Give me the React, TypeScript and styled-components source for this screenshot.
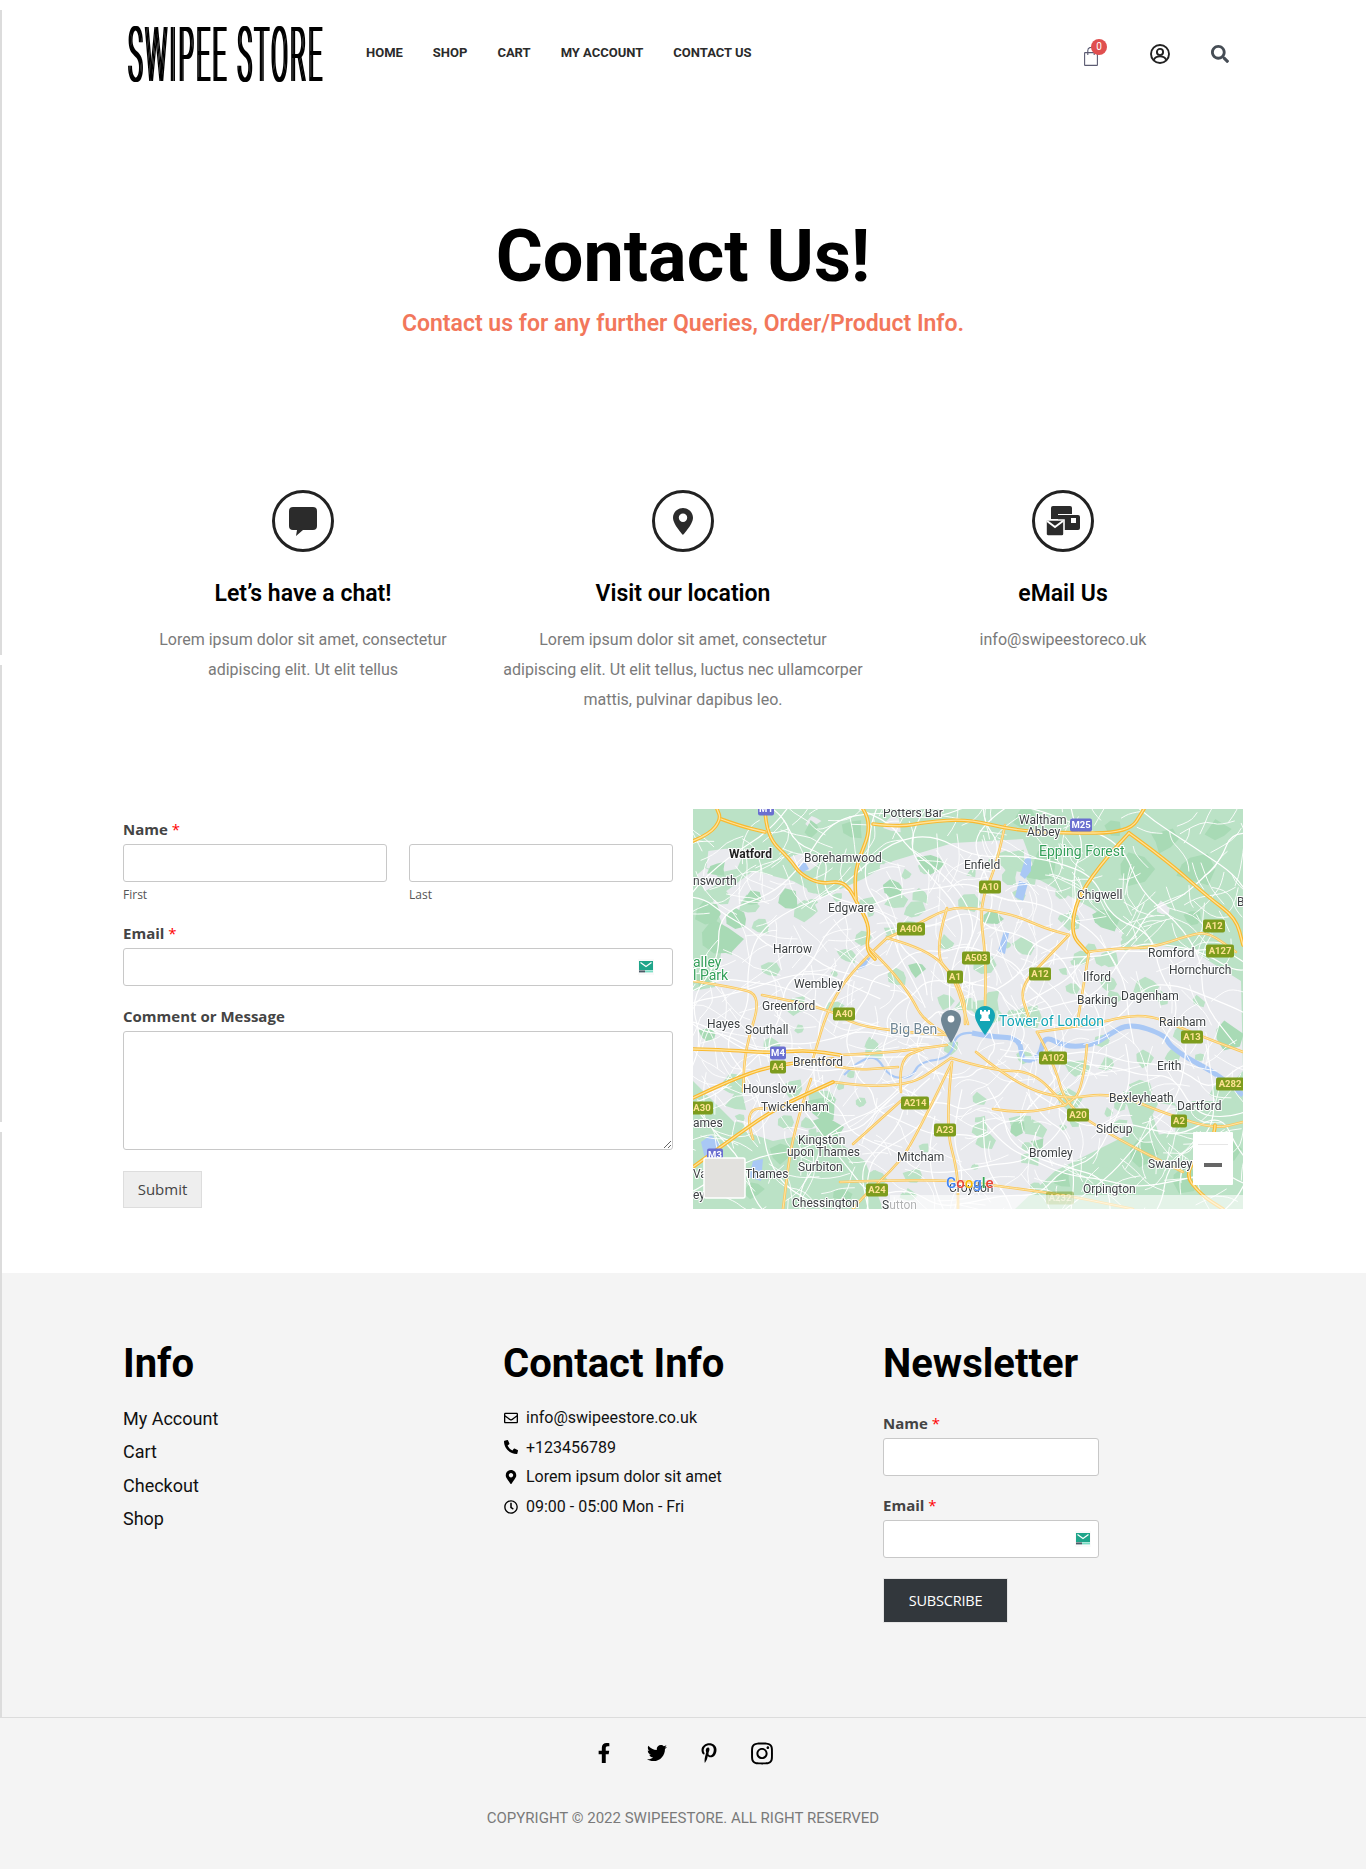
import React from 'react'
import styled, { createGlobalStyle } from 'styled-components'
import {
  FaFacebookF,
  FaInstagram,
  FaMapMarkerAlt,
  FaPhoneAlt,
  FaPinterestP,
  FaRegClock,
  FaRegEnvelope,
  FaSearch,
  FaTwitter,
} from 'react-icons/fa'

//-----------------------------------------------------------------------------------------------
// Global
//-----------------------------------------------------------------------------------------------
const GlobalStyle = createGlobalStyle`
  html, body { margin: 0; padding: 0; background: #fff; }
  body { font-family: Roboto, "Liberation Sans", sans-serif; color: #000; }
  * { box-sizing: border-box; }
`

const Page = styled.div`
  position: relative;
  width: 1366px;
  height: 1869px;
  overflow: hidden;
`

const EdgeRail = styled.div`
  position: absolute;
  left: 0;
  top: 10px;
  width: 2px;
  display: flex;
  flex-direction: column;
  gap: 10px;
`

const EdgeSegment = styled.div<{ $h: number }>`
  height: ${(p) => p.$h}px;
  background: #dcdcdc;
`

const Container = styled.div`
  width: 1120px;
  margin: 0 auto;
`

//-----------------------------------------------------------------------------------------------
// Header
//-----------------------------------------------------------------------------------------------
const Header = styled(Container)`
  height: 106px;
  display: flex;
  align-items: center;
`

const LogoBox = styled.a`
  display: block;
  width: 195px;
  height: 58px;
  margin-left: 4px;
  margin-top: 4px;
  color: #000;
`

const LogoText = styled.span`
  display: block;
  font-size: 76px;
  line-height: 58px;
  font-weight: 300;
  white-space: nowrap;
  letter-spacing: 8px;
  text-shadow: 4px 0 0 #000, 8px 0 0 #000;
  transform: scaleX(0.32);
  transform-origin: left center;
`

const Nav = styled.nav`
  display: flex;
  gap: 30px;
  margin-left: 44px;
`

const NavLink = styled.a`
  font-size: 13px;
  line-height: 16px;
  font-weight: 700;
  color: #2b2b2b;
  text-transform: uppercase;
`

const HeaderIcons = styled.div`
  margin-left: auto;
  display: flex;
  align-items: center;
  padding-right: 14px;
  padding-top: 2px;
`

const CartButton = styled.div`
  position: relative;
  width: 14px;
  height: 19px;
  margin-top: 4px;
  margin-right: 52px;
  color: #5b5b72;
`

const CartBadge = styled.span`
  position: absolute;
  left: 7px;
  top: -8px;
  width: 16px;
  height: 16px;
  border-radius: 50%;
  background: #e04f4f;
  color: #fff;
  font-size: 10px;
  line-height: 16px;
  text-align: center;
`

const UserButton = styled.div`
  width: 20px;
  height: 20px;
  margin-right: 41px;
  color: #222;
`

const SearchButton = styled.div`
  width: 18px;
  height: 18px;
  color: #464d55;
  font-size: 18px;
  line-height: 18px;
`

//-----------------------------------------------------------------------------------------------
// Hero and features
//-----------------------------------------------------------------------------------------------
const Hero = styled.section`
  padding-top: 109px;
  text-align: center;
`

const HeroTitle = styled.h1`
  margin: 0;
  font-size: 72px;
  line-height: 84px;
  font-weight: 700;
  color: #000;
`

const HeroSub = styled.p`
  margin: 10px 0 0;
  font-size: 23px;
  line-height: 30px;
  font-weight: 600;
  color: #f2775b;
`

const Features = styled.div`
  display: grid;
  grid-template-columns: repeat(3, 380px);
  justify-content: center;
  margin-top: 151px;
  height: 224px;
`

const Feature = styled.div`
  text-align: center;
`

const FeatureCircle = styled.div`
  width: 62px;
  height: 62px;
  margin: 0 auto;
  border: 3px solid #222;
  border-radius: 50%;
  display: flex;
  align-items: center;
  justify-content: center;
  color: #2b2b2b;
`

const FeatureTitle = styled.h3`
  margin: 27px 0 0;
  font-size: 23px;
  line-height: 30px;
  font-weight: 600;
  color: #000;
`

const FeatureText = styled.p`
  margin: 16px 0 0;
  font-size: 16px;
  line-height: 30px;
  color: #7a7a7a;
`

//-----------------------------------------------------------------------------------------------
// Form
//-----------------------------------------------------------------------------------------------
const ContactRow = styled(Container)`
  display: grid;
  grid-template-columns: 550px 550px;
  column-gap: 20px;
  margin-top: 95px;
`

const FormColumn = styled.form`
  padding-top: 10px;
  font-family: "Open Sans", "Noto Sans", sans-serif;
`

const FieldLabel = styled.label<{ $gap?: number }>`
  display: block;
  margin-top: ${(p) => p.$gap ?? 0}px;
  margin-bottom: 5px;
  font-size: 15px;
  line-height: 20px;
  font-weight: 700;
  color: #444;
`

const Required = styled.span`
  color: #f00;
  font-weight: 400;
  margin-left: 4px;
`

const NameRow = styled.div`
  display: grid;
  grid-template-columns: 264px 264px;
  column-gap: 22px;
`

const TextInput = styled.input`
  display: block;
  width: 100%;
  height: 38px;
  background: #fff;
  border: 1px solid #c8c8c8;
  border-radius: 3px;
  outline: none;
`

const SubLabel = styled.div`
  margin-top: 5px;
  font-size: 12px;
  line-height: 16px;
  color: #555;
`

const InputWrap = styled.div`
  position: relative;
`

const TempMail = styled.svg<{ $right: number }>`
  position: absolute;
  right: ${(p) => p.$right}px;
  top: 11px;
  width: 16px;
  height: 16px;
`

const MessageBox = styled.textarea`
  display: block;
  width: 100%;
  height: 119px;
  background: #fff;
  border: 1px solid #c8c8c8;
  border-radius: 3px;
  outline: none;
`

const SubmitButton = styled.button`
  display: block;
  width: 79px;
  height: 37px;
  margin-top: 21px;
  padding: 0 0 2px;
  background: #eee;
  border: 1px solid #ddd;
  font-family: "Open Sans", sans-serif;
  font-size: 15px;
  color: #444;
`

const MapFrame = styled.div`
  width: 550px;
  height: 400px;
  overflow: hidden;
  background: #e9eaee;
`

const MapSvg = styled.svg`
  display: block;
  font-family: Roboto, sans-serif;
  filter: blur(0.35px);
`

//-----------------------------------------------------------------------------------------------
// Footer
//-----------------------------------------------------------------------------------------------
const Footer = styled.footer`
  margin-top: 64px;
  height: 596px;
  background: #f4f4f4;
`

const FooterGrid = styled(Container)`
  display: grid;
  grid-template-columns: repeat(3, 380px);
  height: 444px;
  padding-top: 67px;
`

const FooterTitle = styled.h2`
  margin: 0;
  font-size: 40px;
  line-height: 48px;
  font-weight: 700;
  color: #000;
`

const LinkList = styled.ul`
  list-style: none;
  margin: 14px 0 0;
  padding: 0;
`

const LinkItem = styled.li`
  font-size: 18px;
  line-height: 33.4px;
  color: #111;
`

const InfoList = styled.ul`
  list-style: none;
  margin: 15px 0 0;
  padding: 0;
`

const InfoItem = styled.li`
  display: flex;
  align-items: center;
  gap: 8px;
  font-size: 16px;
  line-height: 29.6px;
  color: #111;
`

const InfoIcon = styled.span`
  display: inline-flex;
  justify-content: center;
  width: 15px;
  font-size: 14px;
  color: #000;
`

const NewsForm = styled.form`
  margin-top: 25px;
  width: 216px;
  font-family: "Open Sans", "Noto Sans", sans-serif;
`

const SubscribeButton = styled.button`
  display: block;
  width: 125px;
  height: 45px;
  margin-top: 20px;
  padding: 0;
  background: #32373c;
  border: 1px solid #e4e4e4;
  color: #fff;
  font-family: "Open Sans", sans-serif;
  font-size: 14.5px;
  letter-spacing: -0.2px;
`

const FooterBottom = styled.div`
  border-top: 1px solid #dcdcdc;
  padding-top: 24px;
  text-align: center;
`

const Socials = styled.div`
  display: flex;
  justify-content: center;
  gap: 30.5px;
  height: 22px;
`

const SocialIcon = styled.a<{ $size?: number }>`
  width: 22px;
  height: 22px;
  display: flex;
  align-items: center;
  justify-content: center;
  color: #000;
  font-size: ${(p) => p.$size ?? 20}px;
`

const Copyright = styled.p`
  margin: 44px 0 0;
  font-size: 15px;
  line-height: 20px;
  color: #7a7a7a;
`

//-----------------------------------------------------------------------------------------------
// Icons
//-----------------------------------------------------------------------------------------------
const BagIcon = () => (
  <svg width="14" height="19" viewBox="0 0 14 19" fill="none" stroke="currentColor" strokeWidth="1.1">
    <rect x="0.6" y="5.6" width="12.8" height="12.8" rx="0.5" />
    <path d="M3.8 8V3.6a3.2 3.2 0 0 1 6.4 0V8" />
  </svg>
)

const UserIcon = () => (
  <svg width="20" height="20" viewBox="0 0 20 20" fill="none" stroke="currentColor" strokeWidth="1.9">
    <circle cx="10" cy="10" r="9" />
    <circle cx="10" cy="8" r="3.1" />
    <path d="M3.8 16c1-2.6 3.4-3.6 6.200-3.6s5.200 1 6.200 3.600" />
  </svg>
)

const ChatIcon = () => (
  <svg width="28" height="29" viewBox="0 0 28 29" fill="currentColor">
    <path d="M4 0h20a4 4 0 0 1 4 4v15a4 4 0 0 1-4 4H14l-7 6 1-6H4a4 4 0 0 1-4-4V4a4 4 0 0 1 4-4z" />
  </svg>
)

const PinIcon = () => (
  <svg width="20" height="27" viewBox="0 0 20 27" fill="currentColor">
    <path
      fillRule="evenodd"
      d="M10 0C4.500 0 0 4.400 0 9.800 0 16.500 10 27 10 27s10-10.500 10-17.200C20 4.400 15.500 0 10 0zm0 5.600a4.200 4.200 0 1 1 0 8.400 4.200 4.200 0 0 1 0-8.400z"
    />
  </svg>
)

const MailWalletIcon = () => (
  <svg width="34" height="30" viewBox="0 0 34 30" fill="currentColor">
    <path d="M7 0h17a2 2 0 0 1 2 2v6H5V2a2 2 0 0 1 2-2z" />
    <path fillRule="evenodd" d="M12 9h20a2 2 0 0 1 2 2v11a2 2 0 0 1-2 2H12zM25 12v5h5v-5z" />
    <path d="M5 8h7v5H5z" />
    <path d="M0 14h18v14a2 2 0 0 1-2 2H2a2 2 0 0 1-2-2z" stroke="#fff" strokeWidth="1.6" />
    <path d="M1 15l8 6 8-6" fill="none" stroke="#fff" strokeWidth="2" />
  </svg>
)

const TempMailIcon: React.FunctionComponent<{ right: number }> = ({ right }) => (
  <TempMail $right={right} viewBox="0 0 16 16">
    <rect width="16" height="16" fill="#fafafa" />
    <rect x="1" y="2" width="14" height="9" fill="#1fa58a" />
    <path d="M2.500 3.400L8 7.400l5.500-4" fill="none" stroke="#fff" strokeWidth="1.2" />
    <rect x="1" y="11.400" width="6" height="2" fill="#4a5a66" />
    <rect x="7" y="11.400" width="8" height="2" fill="#79dcc4" />
  </TempMail>
)

//-----------------------------------------------------------------------------------------------
// Map data
//-----------------------------------------------------------------------------------------------
type Pt = [number, number]

const seeded = (start: number) => {
  let s = start
  return () => {
    s = (s * 16807) % 2147483647
    return s / 2147483647
  }
}

const line = (pts: Pt[]): string => {
  // smooth-ish polyline through the midpoints
  if (pts.length < 3) return 'M' + pts.map((p) => p.join(' ')).join('L')
  let d = `M${pts[0][0]} ${pts[0][1]}`
  for (let i = 1; i < pts.length - 1; i++) {
    const mx = (pts[i][0] + pts[i + 1][0]) / 2
    const my = (pts[i][1] + pts[i + 1][1]) / 2
    d += `Q${pts[i][0]} ${pts[i][1]} ${mx} ${my}`
  }
  const last = pts[pts.length - 1]
  return d + `L${last[0]} ${last[1]}`
}

const blob = (rand: () => number, cx: number, cy: number, r: number): string => {
  const pts: string[] = []
  const n = 7
  for (let i = 0; i < n; i++) {
    const a = (i / n) * Math.PI * 2
    const rr = r * (0.55 + rand() * 0.7)
    pts.push(`${(cx + Math.cos(a) * rr).toFixed(1)},${(cy + Math.sin(a) * rr * 0.85).toFixed(1)}`)
  }
  return pts.join(' ')
}

const urban =
  '60,62 100,72 130,88 170,70 200,52 260,34 330,30 345,70 400,100 440,132 500,142 548,172 550,262 522,292 480,292 430,282 442,322 402,342 362,362 322,400 190,400 172,352 130,322 80,332 50,322 20,292 0,272 0,182 22,178 32,122 20,92'

const motorways: Pt[][] = [
  [[72, 0], [73, 27], [97, 50], [107, 65], [127, 75], [147, 72], [157, 80], [163, 92], [177, 117], [173, 140], [182, 150]],
  [[0, 32], [17, 25], [28, 10], [24, 0]],
  [[28, 10], [47, 17], [72, 23]],
  [[170, 0], [180, 15], [163, 57], [162, 77], [163, 90]],
  [[180, 15], [207, 18], [233, 13], [275, 10], [319, 21], [368, 24], [436, 24], [451, 0]],
  [[436, 24], [472, 50], [515, 88], [543, 109], [550, 136]],
  [[436, 24], [390, 73], [376, 123], [394, 143]],
  [[0, 240], [37, 241], [76, 244], [115, 241], [147, 246]],
  [[0, 289], [33, 273], [80, 256], [140, 250]],
  [[0, 358], [44, 326], [83, 299], [140, 273]],
  [[522, 316], [522, 330], [490, 363], [508, 386], [530, 400]],
]

const aRoads: Pt[][] = [
  [[194, 129], [220, 118], [254, 99], [283, 99], [322, 106], [351, 119], [376, 126]],
  [[312, 16], [304, 56], [286, 96], [293, 149], [292, 199]],
  [[394, 143], [426, 139], [458, 139], [497, 126], [515, 123], [543, 143]],
  [[344, 223], [397, 216], [451, 203], [497, 223], [550, 243]],
  [[147, 246], [194, 244], [254, 236]],
  [[69, 186], [135, 199], [161, 216], [211, 223], [254, 226]],
  [[0, 172], [40, 178], [69, 186], [52, 240], [50, 282]],
  [[140, 273], [208, 283], [258, 249]],
  [[259, 253], [219, 337], [197, 363], [172, 386], [160, 400]],
  [[259, 253], [252, 316], [265, 363], [265, 400]],
  [[283, 243], [319, 273], [369, 291], [419, 283], [476, 306], [522, 320], [550, 313]],
  [[344, 223], [362, 256], [372, 296], [422, 329], [490, 363]],
  [[147, 373], [247, 369], [319, 379], [372, 386], [440, 400]],
  [[394, 236], [390, 283], [372, 296]],
  [[176, 139], [197, 159], [219, 189], [229, 209], [254, 226]],
  [[262, 169], [272, 189], [272, 215]],
  [[376, 126], [354, 149], [326, 179], [336, 209]],
  [[194, 129], [160, 160], [135, 199], [120, 250]],
  [[118, 270], [100, 320], [90, 400]],
  [[254, 99], [240, 145], [262, 169], [275, 215]],
  [[194, 129], [235, 140], [262, 169]],
  [[385, 210], [396, 143]],
  [[160, 335], [210, 290]],
  [[60, 330], [50, 300], [83, 299]],
  [[258, 249], [300, 262], [340, 262], [372, 296]],
  [[208, 283], [205, 250], [230, 240]],
  [[120, 250], [150, 262], [205, 258]],
  [[300, 300], [330, 305], [372, 296]],
]

const rand = seeded(4711)

const greenPatches: string[] = Array.from({ length: 150 }, () =>
  blob(rand, 20 + rand() * 510, 40 + rand() * 350, 4 + rand() * 10),
)

const darkPatches: string[] = [
  [25, 130, 24], [15, 105, 14], [45, 110, 12], [95, 90, 13], [240, 55, 15], [330, 10, 12],
  [350, 60, 18], [500, 60, 20], [440, 60, 18], [410, 110, 16], [535, 225, 16], [530, 340, 16],
  [450, 345, 16], [490, 370, 15], [130, 300, 20], [135, 318, 16], [90, 345, 12], [15, 225, 10],
  [325, 320, 10], [345, 335, 8], [160, 20, 14], [120, 20, 10], [25, 60, 10], [225, 160, 9], [300, 110, 9],
  [60, 90, 10], [200, 80, 10], [470, 30, 14], [420, 20, 10], [525, 20, 12], [500, 110, 10],
  [10, 170, 10], [370, 370, 10], [60, 380, 10], [150, 385, 9],
].map(([x, y, r]) => blob(rand, x, y, r))

const townPatches: string[] = [
  [35, 50, 20], [110, 55, 14], [120, 12, 8], [15, 70, 12], [195, 60, 10], [200, 15, 10],
  [470, 100, 10], [440, 270, 8], [470, 310, 16], [490, 290, 14],
].map(([x, y, r]) => blob(rand, x, y, r))

const CENTER: Pt = [262, 235]

const radials: string[] = Array.from({ length: 30 }, (_, i) => {
  const base = (i / 30) * Math.PI * 2 + rand() * 0.1
  const pts: Pt[] = []
  let a = base
  for (let r = 30 + rand() * 70; r < 420; r += 30) {
    a += (rand() - 0.5) * 0.3
    pts.push([CENTER[0] + Math.cos(a) * r, CENTER[1] + Math.sin(a) * r * 0.92])
  }
  return line(pts)
})

const rings: string[] = [38, 70, 104, 140, 178, 220, 265, 320].map((r) => {
  const pts: Pt[] = []
  for (let i = 0; i <= 34; i++) {
    const a = (i / 34) * Math.PI * 2
    const rr = r * (0.93 + rand() * 0.14)
    pts.push([CENTER[0] + Math.cos(a) * rr, CENTER[1] + Math.sin(a) * rr * 0.9])
  }
  return line(pts)
})

const streets: string[] = Array.from({ length: 520 }, () => {
  let x = rand() * 550
  let y = rand() * 400
  let a = rand() * Math.PI * 2
  const pts: Pt[] = [[x, y]]
  const steps = 2 + Math.floor(rand() * 3)
  for (let i = 0; i < steps; i++) {
    a += (rand() - 0.5) * 1.4
    const l = 7 + rand() * 12
    x += Math.cos(a) * l
    y += Math.sin(a) * l
    pts.push([x, y])
  }
  return line(pts)
})

const thames: Pt[] = [
  [550, 286], [526, 266], [494, 249], [476, 236], [472, 226], [437, 214], [415, 226], [401, 236],
  [372, 238], [351, 226], [347, 249], [329, 253], [327, 229], [301, 228], [279, 224],
]

const thamesWest: Pt[] = [
  [279, 224], [263, 223], [258, 249], [226, 253], [219, 269], [197, 269], [183, 246], [165, 253], [151, 266],
]

const placeLabels: { t: string; x: number; y: number; bold?: boolean }[] = [
  { t: 'Potters Bar', x: 190, y: 4 },
  { t: 'Waltham', x: 326, y: 11 },
  { t: 'Abbey', x: 334, y: 23 },
  { t: 'Watford', x: 36, y: 45, bold: true },
  { t: 'Borehamwood', x: 111, y: 49 },
  { t: 'Enfield', x: 271, y: 56 },
  { t: 'nsworth', x: 0, y: 72 },
  { t: 'Chigwell', x: 384, y: 86 },
  { t: 'B', x: 544, y: 93 },
  { t: 'Edgware', x: 135, y: 99 },
  { t: 'Harrow', x: 80, y: 140 },
  { t: 'Romford', x: 455, y: 144 },
  { t: 'Hornchurch', x: 476, y: 161 },
  { t: 'Ilford', x: 390, y: 168 },
  { t: 'Wembley', x: 101, y: 175 },
  { t: 'Dagenham', x: 428, y: 187 },
  { t: 'Barking', x: 384, y: 191 },
  { t: 'Greenford', x: 69, y: 197 },
  { t: 'Rainham', x: 466, y: 213 },
  { t: 'Hayes', x: 14, y: 215 },
  { t: 'Southall', x: 52, y: 221 },
  { t: 'Brentford', x: 100, y: 253 },
  { t: 'Erith', x: 464, y: 257 },
  { t: 'Hounslow', x: 50, y: 280 },
  { t: 'Bexleyheath', x: 416, y: 289 },
  { t: 'Dartford', x: 484, y: 297 },
  { t: 'Twickenham', x: 68, y: 298 },
  { t: 'ames', x: 0, y: 314 },
  { t: 'Sidcup', x: 403, y: 320 },
  { t: 'Kingston', x: 105, y: 331 },
  { t: 'upon Thames', x: 94, y: 343 },
  { t: 'Bromley', x: 336, y: 344 },
  { t: 'Mitcham', x: 204, y: 348 },
  { t: 'Swanley', x: 455, y: 355 },
  { t: 'Surbiton', x: 105, y: 358 },
  { t: 'Thames', x: 52, y: 365 },
  { t: 'Va', x: 0, y: 365 },
  { t: 'Croydon', x: 256, y: 379 },
  { t: 'Orpington', x: 390, y: 380 },
  { t: 'ey', x: 0, y: 386 },
  { t: 'Chessington', x: 99, y: 394 },
  { t: 'Sutton', x: 189, y: 396 },
]

const shields: { t: string; x: number; y: number; blue?: boolean }[] = [
  { t: 'M1', x: 73, y: 0, blue: true },
  { t: 'M25', x: 388, y: 16, blue: true },
  { t: 'A10', x: 297, y: 78 },
  { t: 'A12', x: 521, y: 117 },
  { t: 'A406', x: 218, y: 120 },
  { t: 'A127', x: 527, y: 142 },
  { t: 'A503', x: 283, y: 149 },
  { t: 'A12', x: 347, y: 165 },
  { t: 'A1', x: 262, y: 168 },
  { t: 'A40', x: 151, y: 205 },
  { t: 'A13', x: 499, y: 228 },
  { t: 'M4', x: 85, y: 244, blue: true },
  { t: 'A102', x: 360, y: 249 },
  { t: 'A4', x: 85, y: 258 },
  { t: 'A282', x: 537, y: 275 },
  { t: 'A214', x: 222, y: 294 },
  { t: 'A30', x: 9, y: 299 },
  { t: 'A20', x: 385, y: 306 },
  { t: 'A2', x: 486, y: 312 },
  { t: 'A23', x: 252, y: 321 },
  { t: 'M3', x: 22, y: 346, blue: true },
  { t: 'A24', x: 184, y: 381 },
  { t: 'A232', x: 367, y: 389 },
]

//-----------------------------------------------------------------------------------------------
// LondonMap
//-----------------------------------------------------------------------------------------------
const LondonMap = () => (
  <MapSvg width="550" height="400" viewBox="0 0 550 400">
    <rect width="550" height="400" fill="#bbe2c6" />
    <polygon points={urban} fill="#e9eaee" />
    {townPatches.map((p, i) => <polygon key={i} points={p} fill="#e9eaee" />)}
    {greenPatches.map((p, i) => <polygon key={i} points={p} fill="#bbe2c6" />)}
    {darkPatches.map((p, i) => <polygon key={i} points={p} fill="#a8dab5" />)}

    {/* water */}
    <polygon points="8,333 18,326 26,334 24,348 12,350" fill="#a9c8f5" />
    <polygon points="105,56 112,53 116,60 108,64" fill="#a9c8f5" />
    <polygon points="332,50 338,48 338,62 332,70 327,66" fill="#a9c8f5" />
    <polygon points="326,72 335,74 330,92 322,88" fill="#a9c8f5" />
    <polygon points="311,122 316,124 312,145 305,142" fill="#a9c8f5" />
    <polygon points="170,150 178,148 172,158 162,162" fill="#a9c8f5" />
    <polygon points="60,352 70,350 68,372 56,368" fill="#a9c8f5" />
    <path d={line(thames)} fill="none" stroke="#a9c8f5" strokeWidth="5" />
    <path d={line(thamesWest)} fill="none" stroke="#a9c8f5" strokeWidth="2.2" />

    {/* minor roads */}
    <g fill="none" stroke="#fff">
      {streets.map((d, i) => <path key={i} d={d} strokeWidth="0.9" />)}
      {radials.map((d, i) => <path key={i} d={d} strokeWidth="1.2" />)}
      {rings.map((d, i) => <path key={i} d={d} strokeWidth="1.2" />)}
    </g>

    {/* main roads */}
    <g fill="none" strokeLinejoin="round" strokeLinecap="round">
      {aRoads.map((r, i) => <path key={i} d={line(r)} stroke="#fbc75e" strokeWidth="2.6" />)}
      {aRoads.map((r, i) => <path key={i} d={line(r)} stroke="#fde6a8" strokeWidth="1" />)}
      {motorways.map((r, i) => <path key={i} d={line(r)} stroke="#f9b92f" strokeWidth="3.6" />)}
      {motorways.map((r, i) => <path key={i} d={line(r)} stroke="#fee39a" strokeWidth="1.3" />)}
    </g>

    {/* labels */}
    <g fontSize="12" fill="#3c4043" stroke="#fff" strokeWidth="2" style={{ paintOrder: 'stroke' }}>
      {placeLabels.map((l) => (
        <text key={l.t + l.x} x={l.x} y={l.y} dy=".35em" fontWeight={l.bold ? 700 : 400} fill={l.bold ? '#222' : undefined}>
          {l.t}
        </text>
      ))}
      <text x="346" y="42" dy=".35em" fontSize="14" fill="#34a05a">Epping Forest</text>
      <text x="0" y="153" dy=".35em" fontSize="14" fill="#34a05a">alley</text>
      <text x="0" y="166" dy=".35em" fontSize="14" fill="#34a05a">l Park</text>
      <text x="197" y="220" dy=".35em" fontSize="14" fill="#6f8694">Big Ben</text>
      <text x="306" y="212" dy=".35em" fontSize="14" fill="#12a5b5">Tower of London</text>
    </g>

    {/* road shields */}
    {shields.map((s) => {
      const w = s.t.length * 6 + 4
      return (
        <g key={s.t + s.x} opacity={s.t === 'A232' ? 0.5 : 1}>
          <rect x={s.x - w / 2} y={s.y - 6.5} width={w} height="13" rx="2" fill={s.blue ? '#6a6fd0' : '#7d9c1d'} />
          <text x={s.x} y={s.y} dy=".35em" textAnchor="middle" fontSize="9.5" fontWeight="700" fill={s.blue ? '#fff' : '#fde293'}>
            {s.t}
          </text>
        </g>
      )
    })}

    {/* pins */}
    <path d="M258 201c-5.500 0-10 4.300-10 9.700 0 7 10 23.300 10 23.300s10-16.300 10-23.300c0-5.400-4.500-9.700-10-9.700z" fill="#6f8694" />
    <circle cx="258" cy="210" r="3.400" fill="#fff" />
    <path d="M292 197c-5.500 0-10 4.300-10 9.700 0 6.500 10 19.300 10 19.300s10-12.800 10-19.300c0-5.400-4.500-9.700-10-9.700z" fill="#12a5b5" />
    <path d="M287 201h2v1.500h2V201h2v1.500h2V201h2v4l-1.500 1v3l1.500 1.500V212h-10v-1.500l1.500-1.500v-3L287 205z" fill="#fff" />

    {/* controls */}
    <rect x="197" y="386" width="353" height="14" fill="#fff" opacity="0.6" />
    <text x="253" y="374" dy=".35em" fontSize="15" fontWeight="500" stroke="#fff" strokeWidth="0.5" style={{ paintOrder: 'stroke' }}>
      <tspan fill="#4285f4">G</tspan>
      <tspan fill="#ea4335">o</tspan>
      <tspan fill="#fbbc05">o</tspan>
      <tspan fill="#4285f4">g</tspan>
      <tspan fill="#34a853">l</tspan>
      <tspan fill="#ea4335">e</tspan>
    </text>
    <rect x="11" y="349" width="41" height="40" rx="2" fill="#e2e1de" stroke="#fff" strokeWidth="1.500" />
    <rect x="500" y="323" width="40" height="53" rx="1" fill="#fff" />
    <rect x="505" y="335" width="30" height="1" fill="#e6e6e6" />
    <rect x="511" y="354" width="18" height="4" fill="#666" />
  </MapSvg>
)

//-----------------------------------------------------------------------------------------------
// App
//-----------------------------------------------------------------------------------------------
const App: React.FunctionComponent = () => {
  return (
    <Page>
      <GlobalStyle />
      <EdgeRail>
        <EdgeSegment $h={645} />
        <EdgeSegment $h={457} />
        <EdgeSegment $h={585} />
      </EdgeRail>

      <Header>
        <LogoBox>
          <LogoText>SWIPEE STORE</LogoText>
        </LogoBox>
        <Nav>
          <NavLink>Home</NavLink>
          <NavLink>Shop</NavLink>
          <NavLink>Cart</NavLink>
          <NavLink>My Account</NavLink>
          <NavLink>Contact Us</NavLink>
        </Nav>
        <HeaderIcons>
          <CartButton>
            <BagIcon />
            <CartBadge>0</CartBadge>
          </CartButton>
          <UserButton>
            <UserIcon />
          </UserButton>
          <SearchButton>
            <FaSearch />
          </SearchButton>
        </HeaderIcons>
      </Header>

      <Hero>
        <HeroTitle>Contact Us!</HeroTitle>
        <HeroSub>Contact us for any further Queries, Order/Product Info.</HeroSub>
      </Hero>

      <Features>
        <Feature>
          <FeatureCircle>
            <ChatIcon />
          </FeatureCircle>
          <FeatureTitle>Let’s have a chat!</FeatureTitle>
          <FeatureText>
            Lorem ipsum dolor sit amet, consectetur
            <br />
            adipiscing elit. Ut elit tellus
          </FeatureText>
        </Feature>
        <Feature>
          <FeatureCircle>
            <PinIcon />
          </FeatureCircle>
          <FeatureTitle>Visit our location</FeatureTitle>
          <FeatureText>
            Lorem ipsum dolor sit amet, consectetur
            <br />
            adipiscing elit. Ut elit tellus, luctus nec ullamcorper
            <br />
            mattis, pulvinar dapibus leo.
          </FeatureText>
        </Feature>
        <Feature>
          <FeatureCircle>
            <MailWalletIcon />
          </FeatureCircle>
          <FeatureTitle>eMail Us</FeatureTitle>
          <FeatureText>info@swipeestoreco.uk</FeatureText>
        </Feature>
      </Features>

      <ContactRow>
        <FormColumn>
          <FieldLabel>
            Name<Required>*</Required>
          </FieldLabel>
          <NameRow>
            <div>
              <TextInput />
              <SubLabel>First</SubLabel>
            </div>
            <div>
              <TextInput />
              <SubLabel>Last</SubLabel>
            </div>
          </NameRow>
          <FieldLabel $gap={20}>
            Email<Required>*</Required>
          </FieldLabel>
          <InputWrap>
            <TextInput />
            <TempMailIcon right={19} />
          </InputWrap>
          <FieldLabel $gap={20}>Comment or Message</FieldLabel>
          <MessageBox />
          <SubmitButton type="button">Submit</SubmitButton>
        </FormColumn>
        <MapFrame>
          <LondonMap />
        </MapFrame>
      </ContactRow>

      <Footer>
        <FooterGrid>
          <div>
            <FooterTitle>Info</FooterTitle>
            <LinkList>
              <LinkItem>My Account</LinkItem>
              <LinkItem>Cart</LinkItem>
              <LinkItem>Checkout</LinkItem>
              <LinkItem>Shop</LinkItem>
            </LinkList>
          </div>
          <div>
            <FooterTitle>Contact Info</FooterTitle>
            <InfoList>
              <InfoItem>
                <InfoIcon><FaRegEnvelope /></InfoIcon>
                info@swipeestore.co.uk
              </InfoItem>
              <InfoItem>
                <InfoIcon><FaPhoneAlt /></InfoIcon>
                +123456789
              </InfoItem>
              <InfoItem>
                <InfoIcon><FaMapMarkerAlt /></InfoIcon>
                Lorem ipsum dolor sit amet
              </InfoItem>
              <InfoItem>
                <InfoIcon><FaRegClock /></InfoIcon>
                09:00 - 05:00 Mon - Fri
              </InfoItem>
            </InfoList>
          </div>
          <div>
            <FooterTitle>Newsletter</FooterTitle>
            <NewsForm>
              <FieldLabel>
                Name<Required>*</Required>
              </FieldLabel>
              <TextInput />
              <FieldLabel $gap={19}>
                Email<Required>*</Required>
              </FieldLabel>
              <InputWrap>
                <TextInput />
                <TempMailIcon right={8} />
              </InputWrap>
              <SubscribeButton type="button">SUBSCRIBE</SubscribeButton>
            </NewsForm>
          </div>
        </FooterGrid>
        <FooterBottom>
          <Socials>
            <SocialIcon><FaFacebookF /></SocialIcon>
            <SocialIcon><FaTwitter /></SocialIcon>
            <SocialIcon><FaPinterestP /></SocialIcon>
            <SocialIcon $size={25}><FaInstagram /></SocialIcon>
          </Socials>
          <Copyright>COPYRIGHT © 2022 SWIPEESTORE. ALL RIGHT RESERVED</Copyright>
        </FooterBottom>
      </Footer>
    </Page>
  )
}

export default App
